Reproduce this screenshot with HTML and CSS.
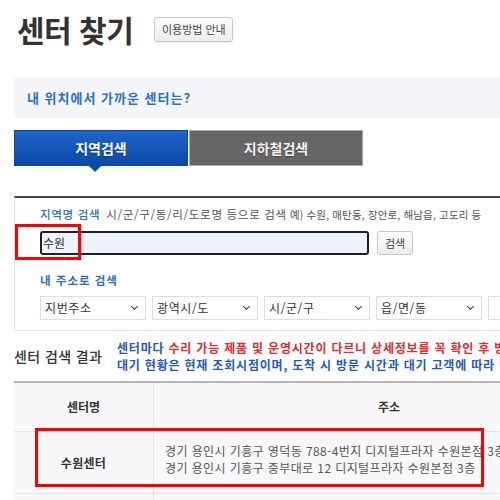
FILE: index.html
```html
<!DOCTYPE html>
<html lang="ko">
<head>
<meta charset="utf-8">
<link rel="stylesheet" href="styles.css">
</head>
<body>
<div class="page">
  <div class="head">
    <h1 class="title">센터 찾기</h1>
    <button class="guide-btn">이용방법 안내</button>
  </div>
  <div class="nearby">내 위치에서 가까운 센터는?</div>
  <div class="tabs">
    <div class="tab tab-on">지역검색</div>
    <div class="tab tab-off">지하철검색</div>
  </div>
  <div class="search-box">
    <div class="label-row">
      <span class="label">지역명 검색</span>
      <span class="hint">시/군/구/동/리/도로명 등으로 검색</span>
      <span class="example">예) 수원, 매탄동, 장안로, 해남읍, 고도리 등</span>
    </div>
    <div class="input-row">
      <div class="text-input">수원</div>
      <button class="search-btn">검색</button>
    </div>
    <div class="label addr-label">내 주소로 검색</div>
    <div class="select-row">
      <div class="select">지번주소<span class="chev"></span></div>
      <div class="select">광역시/도<span class="chev"></span></div>
      <div class="select">시/군/구<span class="chev"></span></div>
      <div class="select">읍/면/동<span class="chev"></span></div>
      <div class="select">&nbsp;<span class="chev"></span></div>
    </div>
  </div>
  <div class="result-head">
    <div class="result-title">센터 검색 결과</div>
    <div class="result-note">
      <div><span class="blue">센터마다 </span><span class="red">수리 가능 제품 및 운영시간이 다르니 상세정보를 꼭 확인 후 방문해 주세요.</span></div>
      <div class="blue">대기 현황은 현재 조회시점이며, 도착 시 방문 시간과 대기 고객에 따라 변동될 수 있습니다.</div>
    </div>
  </div>
  <div class="table">
    <div class="row header">
      <div class="c1">센터명</div>
      <div class="c2">주소</div>
    </div>
    <div class="row item">
      <div class="c1 name">수원센터</div>
      <div class="c2 addr">
        <div>경기 용인시 기흥구 영덕동 788-4번지 디지털프라자 수원본점 3층</div>
        <div>경기 용인시 기흥구 중부대로 12 디지털프라자 수원본점 3층</div>
      </div>
    </div>
    <div class="row empty">
      <div class="c1"></div>
      <div class="c2"></div>
    </div>
  </div>
  <div class="mark mark-input"></div>
  <div class="mark mark-row"></div>
</div>
</body>
</html>
```
FILE: styles.css
```css
html, body {
  margin: 0;
  padding: 0;
  overflow: hidden;
  background: #fff;
}
body {
  width: 500px;
  height: 500px;
  font-family: "Noto Sans CJK KR", "Noto Sans", sans-serif;
  color: #333;
}
.page {
  position: relative;
  width: 1000px;
  padding-left: 14px;
}
.head {
  display: flex;
  align-items: center;
  height: 58px;
  padding-left: 3px;
}
.title {
  margin: 0;
  font-size: 30px;
  font-weight: 700;
  color: #333;
  letter-spacing: -0.5px;
  line-height: 40px;
}
.guide-btn {
  margin-left: 21px;
  width: 79px;
  height: 25px;
  padding: 0;
  border: 1px solid #c8c8c8;
  border-radius: 3px;
  background: linear-gradient(#fdfdfd, #ececec);
  font-family: inherit;
  font-size: 11px;
  color: #444;
  box-shadow: 0 1px 1px rgba(0,0,0,0.08);
}
.nearby {
  margin-top: 20px;
  height: 40px;
  line-height: 40px;
  padding-left: 13px;
  background: #f3f5fa;
  color: #2a6fd0;
  font-size: 13px;
  font-weight: 700;
  letter-spacing: 1px;
}
.tabs {
  display: flex;
  margin-top: 12px;
  height: 36px;
}
.tab {
  width: 174px;
  box-sizing: border-box;
  text-align: center;
  line-height: 34px;
  font-size: 14px;
  font-weight: 700;
  color: #fff;
  text-shadow: 0 1px 1px rgba(0,0,0,0.35);
}
.tab-on {
  position: relative;
  background: linear-gradient(#1f63c9, #0d4aa6);
  border: 1px solid #0d48a0;
}
.tab-on::after {
  content: "";
  position: absolute;
  left: 74px;
  top: 35px;
  border-left: 6px solid transparent;
  border-right: 6px solid transparent;
  border-top: 6px solid #0d4aa6;
}
.tab-off {
  background: #666;
  border: 1px solid #aaa;
  margin-left: 1px;
  color: #f2f2f2;
}
.search-box {
  margin-top: 30px;
  border-top: 2px solid #444;
  border-left: 1px solid #e2e2e2;
  border-bottom: 1px solid #e2e2e2;
  height: 135px;
  padding-left: 25px;
  box-sizing: border-box;
}
.label-row {
  margin-top: 8px;
  display: flex;
  align-items: baseline;
  height: 18px;
  white-space: nowrap;
}
.label {
  color: #2a6fd0;
  font-size: 11.5px;
  font-weight: 500;
  letter-spacing: 0.7px;
}
.hint {
  margin-left: 6px;
  font-size: 11.5px;
  color: #555;
  letter-spacing: 0.7px;
}
.example {
  margin-left: 3px;
  font-size: 10.5px;
  color: #555;
  letter-spacing: 0.15px;
}
.input-row {
  display: flex;
  margin-top: 7px;
  height: 24px;
}
.text-input {
  width: 329px;
  height: 24px;
  box-sizing: border-box;
  border: 2px solid #222;
  border-radius: 3px;
  background: #eef3fb;
  font-size: 12px;
  line-height: 20px;
  padding-left: 1px;
  color: #333;
}
.search-btn {
  margin-left: 8px;
  width: 36px;
  height: 24px;
  padding: 0;
  border: 1px solid #c8c8c8;
  border-radius: 3px;
  background: linear-gradient(#fdfdfd, #ececec);
  font-family: inherit;
  font-size: 11px;
  color: #444;
}
.addr-label {
  display: block;
  margin-top: 16px;
  line-height: 18px;
  font-weight: 700;
  font-size: 11.5px;
  letter-spacing: 1px;
}
.select-row {
  display: flex;
  gap: 6px;
  margin-top: 7px;
}
.select {
  position: relative;
  width: 106px;
  height: 24px;
  box-sizing: border-box;
  border: 1px solid #ddd;
  background: #fff;
  font-size: 12px;
  line-height: 22px;
  padding-left: 4px;
  color: #333;
  letter-spacing: 0.6px;
}
.chev {
  position: absolute;
  right: 8px;
  top: 7px;
  width: 4px;
  height: 4px;
  border-right: 1.5px solid #333;
  border-bottom: 1.5px solid #333;
  transform: rotate(45deg);
}
.result-head {
  display: flex;
  align-items: center;
  margin-top: 4px;
  height: 42px;
  white-space: nowrap;
}
.result-title {
  width: 103px;
  font-size: 14px;
  font-weight: 500;
  color: #333;
  letter-spacing: 0.4px;
}
.result-note {
  font-size: 12px;
  font-weight: 700;
  line-height: 17px;
  letter-spacing: 0.8px;
}
.blue { color: #1f58c4; }
.red { color: #e8282e; }
.table {
  margin-top: 4px;
  border-top: 2px solid #b5b5b5;
  background: #f8f8fa;
}
.row {
  display: flex;
  border-bottom: 1px solid #e4e4e8;
}
.c1 {
  width: 139px;
  border-right: 1px solid #e4e4e8;
  text-align: center;
}
.c2 {
  flex: 1;
}
.header {
  height: 48px;
  align-items: center;
  font-size: 12px;
  font-weight: 700;
}
.header .c1, .header .c2 { height: 48px; line-height: 48px; }
.header .c2 { text-align: center; width: 470px; flex: none; }
.item {
  height: 61px;
}
.item .c1 {
  display: flex;
  align-items: center;
  justify-content: center;
  font-size: 12px;
  font-weight: 700;
  letter-spacing: 0.3px;
}
.addr {
  padding-left: 11px;
  padding-top: 10px;
  font-size: 12px;
  line-height: 17px;
  color: #555;
  white-space: nowrap;
  letter-spacing: 0.4px;
}
.empty { height: 30px; }
.mark {
  position: absolute;
  border: 3px solid #f00;
  box-sizing: border-box;
}
.mark-input {
  left: 15px;
  top: 224px;
  width: 66px;
  height: 36px;
}
.mark-row {
  left: 35px;
  top: 428px;
  width: 449px;
  height: 59px;
}
```
